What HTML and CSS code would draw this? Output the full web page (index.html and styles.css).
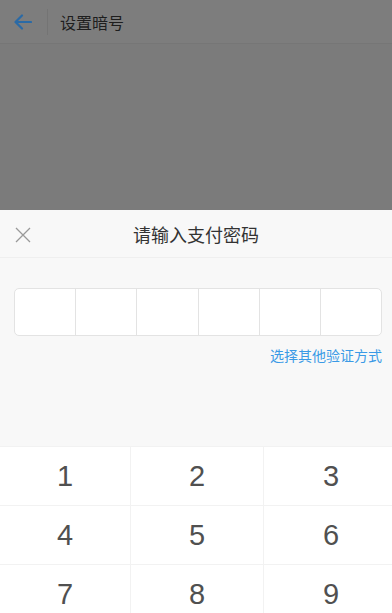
FILE: index.html
```html
<!DOCTYPE html>
<html lang="zh-CN">
<head>
    <meta charset="UTF-8">
    <meta name="viewport" content="width=device-width, initial-scale=1.0">
    <title>设置暗号</title>
    <link rel="stylesheet" href="styles.css">
</head>
<body>

    <header class="topbar">
        <a class="back" href="#">
            <svg width="18" height="16" viewBox="0 0 18 16">
                <path d="M17 8H2M8 1.5L1.5 8L8 14.5" fill="none" stroke="#2a6aa6" stroke-width="2.2" stroke-linecap="round" stroke-linejoin="round"/>
            </svg>
        </a>
        <span class="divider"></span>
        <span class="title">设置暗号</span>
    </header>

    <div class="content"></div>

    <div class="sheet">
        <div class="sheet-head">
            <span class="close">
                <svg width="16" height="16" viewBox="0 0 16 16">
                    <path d="M1 1L15 15M15 1L1 15" stroke="#999" stroke-width="1.3"/>
                </svg>
            </span>
            <h2>请输入支付密码</h2>
        </div>

        <div class="pwd-area">
            <div class="pwd-box">
                <span></span><span></span><span></span><span></span><span></span><span></span>
            </div>
            <a class="other" href="#">选择其他验证方式</a>
        </div>

        <div class="keypad">
            <button>1</button>
            <button>2</button>
            <button>3</button>
            <button>4</button>
            <button>5</button>
            <button>6</button>
            <button>7</button>
            <button>8</button>
            <button>9</button>
            <button class="blank"></button>
            <button>0</button>
            <button class="blank"></button>
        </div>
    </div>

</body>
</html>
```

FILE: styles.css
```css
* {
    box-sizing: border-box;
}

html, body {
    margin: 0;
    padding: 0;
    height: 100%;
    overflow: hidden;
    font-family: "Noto Sans CJK SC", "Noto Sans", sans-serif;
    background-color: #7b7b7b;
}

.topbar {
    height: 44px;
    display: flex;
    align-items: center;
    background-color: #7d7d7d;
    border-bottom: 1px solid #767676;
}

.back {
    display: flex;
    align-items: center;
    padding: 0 15px 0 14px;
    height: 100%;
}

.divider {
    width: 1px;
    height: 26px;
    background-color: #747474;
}

.title {
    margin-left: 12px;
    font-size: 16px;
    color: #1e1e1e;
}

.sheet {
    position: fixed;
    top: 210px;
    left: 0;
    right: 0;
    bottom: 0;
    background-color: #f8f8f8;
    overflow: hidden;
}

.sheet-head {
    position: relative;
    height: 48px;
    display: flex;
    align-items: center;
    justify-content: center;
    border-bottom: 1px solid #efefef;
}

.sheet-head h2 {
    margin: 0;
    font-size: 18px;
    font-weight: normal;
    color: #333;
}

.close {
    position: absolute;
    left: 15px;
    top: 17px;
    display: flex;
}

.pwd-area {
    padding: 30px 10px 0 14px;
    height: 188px;
}

.pwd-box {
    display: flex;
    height: 48px;
    background-color: #fff;
    border: 1px solid #e3e3e3;
    border-radius: 5px;
    overflow: hidden;
}

.pwd-box span {
    flex: 1;
    border-right: 1px solid #e3e3e3;
}

.pwd-box span:last-child {
    border-right: none;
}

.other {
    display: block;
    margin-top: 9px;
    text-align: right;
    font-size: 14px;
    color: #3a9ae6;
    text-decoration: none;
}

.keypad {
    display: grid;
    grid-template-columns: 131px 133px 134px;
    width: 398px;
    background-color: #fff;
    border-top: 1px solid #f2f2f2;
}

.keypad button {
    height: 59px;
    border: none;
    border-right: 1px solid #f2f2f2;
    border-bottom: 1px solid #f2f2f2;
    background-color: #fff;
    font-family: "Liberation Sans", Arial, sans-serif;
    font-size: 29px;
    color: #505050;
    padding: 0;
}

.keypad button:nth-child(3n) {
    border-right: none;
}
```
